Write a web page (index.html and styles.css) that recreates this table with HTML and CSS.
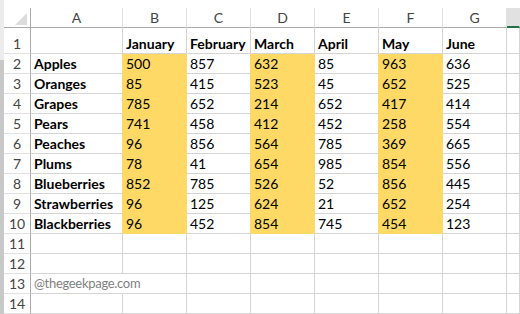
FILE: index.html
```html
<!DOCTYPE html>
<html>
<head>
<meta charset="utf-8">
<link rel="stylesheet" href="styles.css">
</head>
<body>
<div class="sheet">
  <div class="strip"></div>
  <div class="main">
    <div class="grid">
      <div class="corner"><svg width="12" height="12" viewBox="0 0 12 12"><polygon points="12,0 12,12 0,12" fill="#dcdcdc"/></svg></div>
      <div class="ch">A</div><div class="ch">B</div><div class="ch">C</div><div class="ch">D</div><div class="ch">E</div><div class="ch">F</div><div class="ch">G</div><div class="ch sel"></div>

      <div class="rh">1</div><div class="c"></div><div class="c b">January</div><div class="c b">February</div><div class="c b">March</div><div class="c b">April</div><div class="c b">May</div><div class="c b">June</div><div class="c"></div>

      <div class="rh">2</div><div class="c b">Apples</div><div class="c y">500</div><div class="c">857</div><div class="c y">632</div><div class="c">85</div><div class="c y">963</div><div class="c">636</div><div class="c"></div>
      <div class="rh">3</div><div class="c b">Oranges</div><div class="c y">85</div><div class="c">415</div><div class="c y">523</div><div class="c">45</div><div class="c y">652</div><div class="c">525</div><div class="c"></div>
      <div class="rh">4</div><div class="c b">Grapes</div><div class="c y">785</div><div class="c">652</div><div class="c y">214</div><div class="c">652</div><div class="c y">417</div><div class="c">414</div><div class="c"></div>
      <div class="rh">5</div><div class="c b">Pears</div><div class="c y">741</div><div class="c">458</div><div class="c y">412</div><div class="c">452</div><div class="c y">258</div><div class="c">554</div><div class="c"></div>
      <div class="rh">6</div><div class="c b">Peaches</div><div class="c y">96</div><div class="c">856</div><div class="c y">564</div><div class="c">785</div><div class="c y">369</div><div class="c">665</div><div class="c"></div>
      <div class="rh">7</div><div class="c b">Plums</div><div class="c y">78</div><div class="c">41</div><div class="c y">654</div><div class="c">985</div><div class="c y">854</div><div class="c">556</div><div class="c"></div>
      <div class="rh">8</div><div class="c b">Blueberries</div><div class="c y">852</div><div class="c">785</div><div class="c y">526</div><div class="c">52</div><div class="c y">856</div><div class="c">445</div><div class="c"></div>
      <div class="rh">9</div><div class="c b">Strawberries</div><div class="c y">96</div><div class="c">125</div><div class="c y">624</div><div class="c">21</div><div class="c y">652</div><div class="c">254</div><div class="c"></div>
      <div class="rh">10</div><div class="c b">Blackberries</div><div class="c y">96</div><div class="c">452</div><div class="c y">854</div><div class="c">745</div><div class="c y">454</div><div class="c">123</div><div class="c"></div>

      <div class="rh">11</div><div class="c"></div><div class="c"></div><div class="c"></div><div class="c"></div><div class="c"></div><div class="c"></div><div class="c"></div><div class="c"></div>
      <div class="rh">12</div><div class="c"></div><div class="c"></div><div class="c"></div><div class="c"></div><div class="c"></div><div class="c"></div><div class="c"></div><div class="c"></div>
      <div class="rh">13</div><div class="c ov">@thegeekpage.com</div><div class="c"></div><div class="c"></div><div class="c"></div><div class="c"></div><div class="c"></div><div class="c"></div><div class="c"></div>
      <div class="rh">14</div><div class="c"></div><div class="c"></div><div class="c"></div><div class="c"></div><div class="c"></div><div class="c"></div><div class="c"></div><div class="c"></div>
    </div>
  </div>
</div>
</body>
</html>
```
FILE: styles.css
```css
html, body {
  margin: 0;
  padding: 0;
  background: #ffffff;
}
body {
  font-family: Lato, "Liberation Sans", sans-serif;
  font-size: 14px;
  color: #000;
  width: 520px;
  height: 314px;
  overflow: hidden;
}
.sheet {
  display: flex;
  height: 314px;
}
.strip {
  width: 4px;
  flex: none;
  background: linear-gradient(#ececec 0, #ececec 60px, #c8c8c8 60px);
}
.main {
  flex: 1;
  padding-top: 8px;
  overflow: hidden;
}
.grid {
  display: grid;
  grid-template-columns: 27px 92px repeat(6, 64px) 1fr;
  grid-template-rows: 20px 26px repeat(13, 20px);
}
.grid > div {
  box-sizing: border-box;
  border-right: 1px solid #d4d4d4;
  border-bottom: 1px solid #d4d4d4;
  display: flex;
  align-items: flex-end;
  line-height: 17px;
  padding: 0 3px 1px;
  white-space: nowrap;
}
.grid > .corner {
  border-right: 1px solid #ababab;
  border-bottom: 1px solid #ababab;
  padding: 0 3px 2px 0;
  justify-content: flex-end;
}
.corner svg {
  display: block;
}
.grid > .ch {
  border-right-color: #e1e1e1;
  border-bottom-color: #ababab;
  align-items: center;
  justify-content: center;
  color: #444;
  padding: 0;
}
.grid > .sel {
  background: #e1e1e1;
  border-bottom: 2px solid #217346;
}
.grid > .rh {
  border-right-color: #ababab;
  border-bottom-color: #e1e1e1;
  justify-content: center;
  color: #444;
  padding: 0 0 1px;
}
.b {
  font-weight: bold;
}
.grid > .y {
  background: #ffd966;
  border-right-color: #ffd966;
  border-bottom-color: #ffd966;
  box-shadow: -1px 0 0 #ffd966;
}
.grid > .ov {
  border-right-color: transparent;
  color: #7f7f7f;
  font-size: 13px;
  letter-spacing: -0.3px;
  overflow: visible;
}
```
